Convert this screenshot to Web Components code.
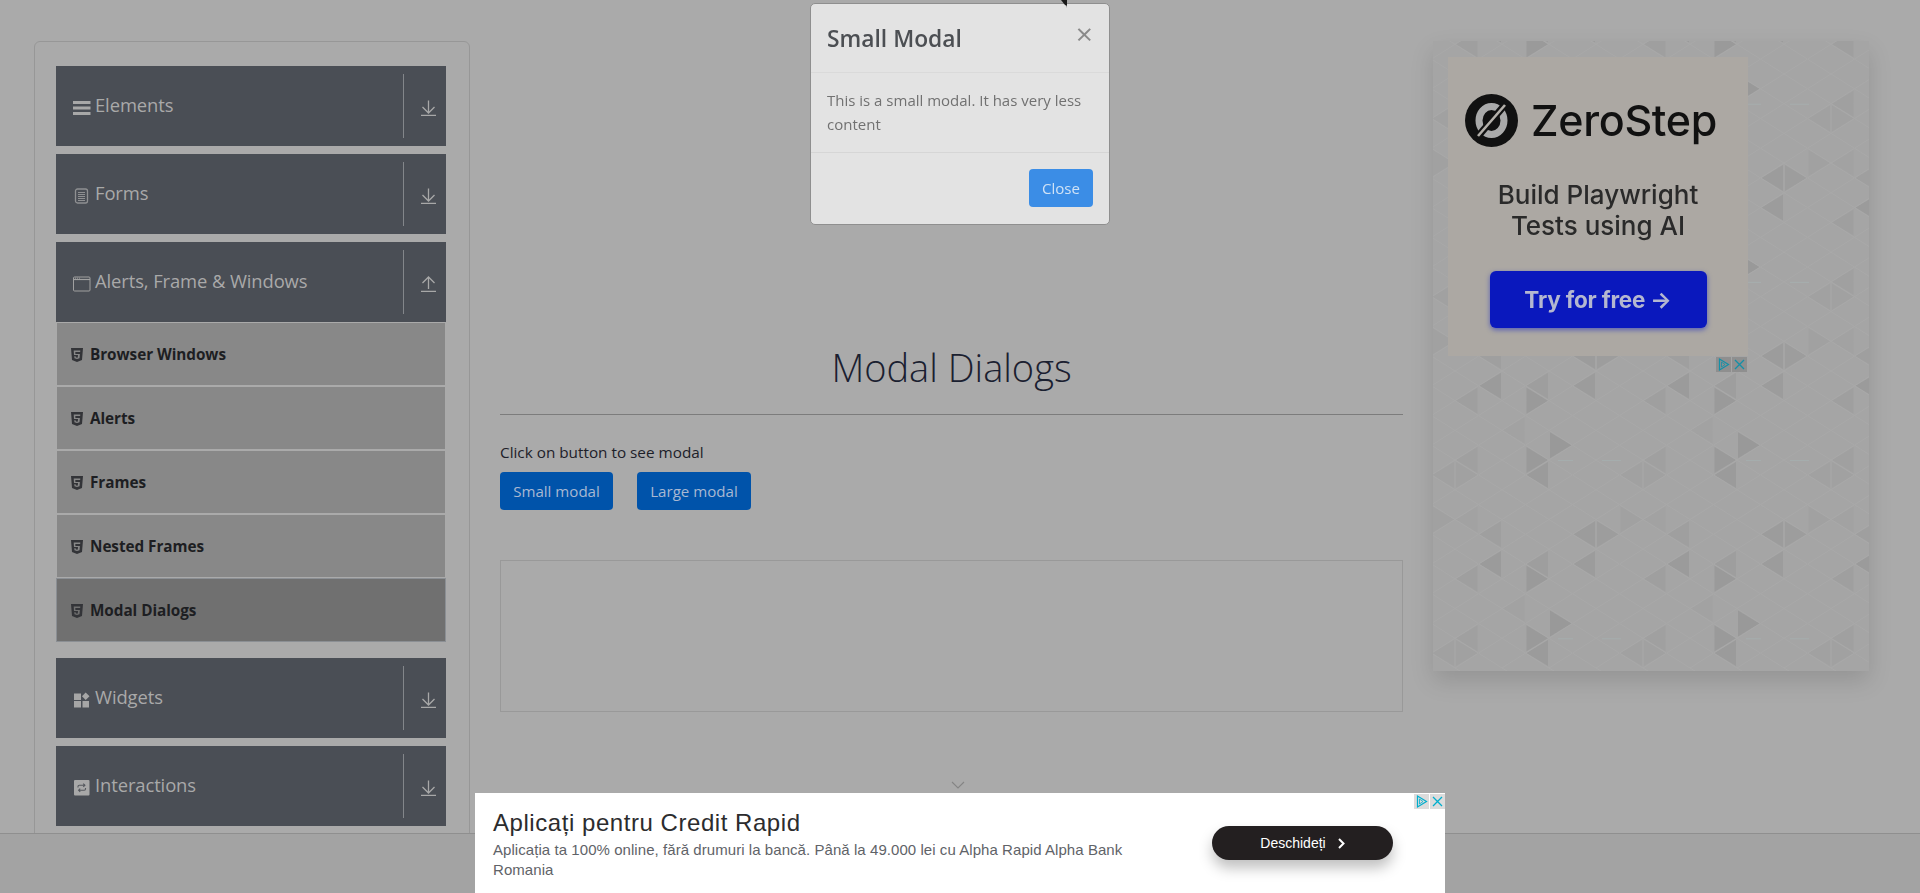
<!DOCTYPE html>
<html lang="en">
<head>
<meta charset="utf-8">
<title>Modal Dialogs</title>
<style>
  html, body { margin: 0; height: 893px; overflow: hidden; background: #aaa; }
  body { position: relative; font-family: "Open Sans", "Liberation Sans", sans-serif; }
</style>
</head>
<body>
<app-shell>
  <side-nav slot="nav">
    <nav-group label="Elements" icon="menu"></nav-group>
    <nav-group label="Forms" icon="note"></nav-group>
    <nav-group label="Alerts, Frame &amp; Windows" icon="window" open>
      <nav-item>Browser Windows</nav-item>
      <nav-item>Alerts</nav-item>
      <nav-item>Frames</nav-item>
      <nav-item>Nested Frames</nav-item>
      <nav-item active>Modal Dialogs</nav-item>
    </nav-group>
    <nav-group label="Widgets" icon="widgets"></nav-group>
    <nav-group label="Interactions" icon="swap"></nav-group>
  </side-nav>
  <page-main slot="main" heading="Modal Dialogs"></page-main>
  <promo-card slot="promo"></promo-card>
</app-shell>
<page-footer></page-footer>
<bottom-ad></bottom-ad>
<modal-dialog heading="Small Modal">This is a small modal. It has very less content</modal-dialog>

<script>
const icons = {
  menu: `<svg width="18" height="16" viewBox="0 0 18 16"><path fill="#a8a8a8" d="M0 1h17.5v3H0zM0 6.5h17.5v3H0zM0 12h17.5v3H0z"/></svg>`,
  note: `<svg width="18" height="16" viewBox="0 0 18 16" fill="none" stroke="#8f9092"><rect x="2.5" y="1" width="12" height="14" rx="2" stroke-width="1.3"/><path d="M5 4.5h7M5 6.5h7M5 8.5h7M5 10.5h7M5 12.5h7" stroke-width="1"/></svg>`,
  window: `<svg width="18" height="16" viewBox="0 0 18 16" fill="none" stroke="#a0a0a0"><rect x=".5" y="1" width="16.5" height="14" rx="1"/><path d="M1 3.5h16" stroke-width="1.2"/><path d="M2 2.2h1M4 2.2h1M6 2.2h1" stroke-width=".9"/></svg>`,
  widgets: `<svg width="18" height="16" viewBox="0 0 18 16" fill="#a6a6a6"><path d="M1 1.500h7v6.500H1zM1 9h7v6.500H1zM9.500 9H16v6.500H9.500zM12.700 .5l3.800 3.800-3.800 3.700-3.700-3.700z"/></svg>`,
  swap: `<svg width="18" height="16" viewBox="0 0 18 16"><rect x="1" y="0" width="15.500" height="15.500" rx="1" fill="#a8a8a8"/><path fill="none" stroke="#55585e" stroke-width="1.100" d="M5 7.500V6.500c0-.8.5-1.200 1.200-1.200h5.500M10.300 3.700l1.600 1.600-1.600 1.600M12.500 8v1c0 .8-.5 1.200-1.200 1.200H5.800M7.200 8.600l-1.600 1.600 1.600 1.600"/></svg>`
};

const arrowIcon = up => up
  ? `<svg width="15" height="16" viewBox="0 0 15 16" fill="none" stroke="#a8a8a8" stroke-width="1.300"><path d="M0 15.300h15M7.500 13V1.500M1.500 7l6-6 6 6"/></svg>`
  : `<svg width="15" height="16" viewBox="0 0 15 16" fill="none" stroke="#a8a8a8" stroke-width="1.300"><path d="M0 15.300h15M7.500 .5V12.500M1.500 7l6 6 6-6"/></svg>`;

const shieldIcon = `<svg width="12" height="14" viewBox="0 0 12 14"><path fill="#333438" fill-rule="evenodd" d="M0 0h12l-1 12L6 14l-5-2zM9.300 2.600H2.700l.3 4.500h4l-.2 2.300L6 9.700l-1.300-.4-.1-1.100H3.300l.2 2.100L6 11.100l2.500-.8.4-4.400H4.400l-.1-2h4.900z"/></svg>`;

class AppShell extends HTMLElement {
  connectedCallback() {
    const shadowRoot = this.attachShadow({ mode: 'open' });
    shadowRoot.innerHTML = `
      <style>
        :host { display: grid; grid-template-columns: 436px 903px 436px; column-gap: 30px; padding: 41px 0 0 34px; }
      </style>
      <slot name="nav"></slot>
      <slot name="main"></slot>
      <slot name="promo"></slot>
    `;
  }
}
customElements.define('app-shell', AppShell);

class SideNav extends HTMLElement {
  connectedCallback() {
    const shadowRoot = this.attachShadow({ mode: 'open' });
    shadowRoot.innerHTML = `
      <style>
        :host { display: flex; flex-direction: column; gap: 8px; height: 880px; box-sizing: border-box; padding: 24px 23px 0 21px; border: 1px solid #979797; border-radius: 6px; }
      </style>
      <slot></slot>
    `;
  }
}
customElements.define('side-nav', SideNav);

class NavGroup extends HTMLElement {
  connectedCallback() {
    const shadowRoot = this.attachShadow({ mode: 'open' });
    const open = this.hasAttribute('open');
    shadowRoot.innerHTML = `
      <style>
        :host { display: block; }
        :host([open]) { margin-bottom: 8px; }
        .head { display: flex; align-items: stretch; height: 80px; box-sizing: border-box; padding: 8px 0 8px 17px; background: #4a4e55; }
        .title { flex: 1; display: flex; align-items: center; gap: 4px; font-size: 18.400px; color: #a9a9a9; letter-spacing: -.1px; }
        .title span { position: relative; top: -2px; }
        .title svg { margin-top: 4px; }
        .arrow { width: 43px; box-sizing: border-box; border-left: 1px solid #83868a; display: flex; align-items: center; justify-content: flex-end; padding: 4px 10px 0 0; }
        .list { display: flex; flex-direction: column; gap: 2px; padding: 1px 1px 0; }
      </style>
      <div class="head">
        <div class="title">${icons[this.getAttribute('icon')]}<span>${this.getAttribute('label').replace('&', '&amp;')}</span></div>
        <div class="arrow">${arrowIcon(open)}</div>
      </div>
      ${open ? '<div class="list"><slot></slot></div>' : ''}
    `;
  }
}
customElements.define('nav-group', NavGroup);

class NavItem extends HTMLElement {
  connectedCallback() {
    const shadowRoot = this.attachShadow({ mode: 'open' });
    shadowRoot.innerHTML = `
      <style>
        :host { display: flex; align-items: center; gap: 7px; height: 62px; box-sizing: border-box; padding: 0 0 1px 14px; background: #888; font-size: 15.300px; font-weight: 700; letter-spacing: -.05px; color: #1d1e22; }
        :host([active]) { height: 64px; margin: -1px -1px 0; padding-left: 14px; background: #707070; border: 1px solid #8b8f94; }
        svg { flex: none; margin-top: 2px; }
      </style>
      ${shieldIcon}<slot></slot>
    `;
  }
}
customElements.define('nav-item', NavItem);

class PageMain extends HTMLElement {
  connectedCallback() {
    const shadowRoot = this.attachShadow({ mode: 'open' });
    shadowRoot.innerHTML = `
      <style>
        :host { display: block; padding-top: 302px; color: #1d2129; }
        h1 { margin: 0; font-size: 38px; font-weight: 300; line-height: 48px; text-align: center; color: #1a2030; }
        hr { margin: 23px 0 0; border: 0; border-top: 1px solid #7c7c7c; }
        p { margin: 25px 0 0; font-size: 15.300px; line-height: 24px; }
        .actions { display: flex; gap: 24px; margin-top: 8px; }
        .large { width: 114px; }
        .frame { height: 152px; margin-top: 50px; border: 1px solid #999; box-sizing: border-box; }
      </style>
      <h1>${this.getAttribute('heading')}</h1>
      <hr>
      <p>Click on button to see modal</p>
      <div class="actions">
        <blue-button>Small modal</blue-button>
        <blue-button class="large">Large modal</blue-button>
      </div>
      <div class="frame"></div>
    `;
  }
}
customElements.define('page-main', PageMain);

class BlueButton extends HTMLElement {
  connectedCallback() {
    const shadowRoot = this.attachShadow({ mode: 'open' });
    shadowRoot.innerHTML = `
      <style>
        :host { display: flex; align-items: center; justify-content: center; width: 113px; height: 38px; border-radius: 4px; background: var(--btn-bg, #0053aa); color: var(--btn-fg, #a8b8d2); font-size: 15.100px; }
      </style>
      <slot></slot>
    `;
  }
}
customElements.define('blue-button', BlueButton);

class PromoCard extends HTMLElement {
  connectedCallback() {
    const shadowRoot = this.attachShadow({ mode: 'open' });
    shadowRoot.innerHTML = `
      <style>
        :host { display: block; position: relative; width: 436px; height: 630px; box-sizing: border-box; padding: 16px 0 0 15px; box-shadow: 0 10px 22px rgba(0,0,0,.13); overflow: visible; font-family: Inter, "Liberation Sans", sans-serif; }
        .bg { position: absolute; inset: 0; }
        .box { position: relative; width: 300px; height: 299px; background: #aca8a3; display: flex; flex-direction: column; align-items: center; filter: blur(.5px); }
        .logo { display: flex; align-items: center; gap: 13px; margin-top: 37px; align-self: flex-start; padding-left: 17px; font-size: 43px; font-weight: 500; color: #111; letter-spacing: -.3px; line-height: 53px; }
        .lead { margin-top: 32px; font-size: 26px; line-height: 31px; font-weight: 500; text-align: center; color: #2a2a2a; }
        .cta { margin-top: 30px; width: 217px; height: 57px; border-radius: 6px; background: #0a18bd; box-shadow: 0 2px 5px rgba(10,25,196,.5); color: #b4b7d0; font-size: 22.500px; font-weight: 700; display: flex; align-items: center; justify-content: center; letter-spacing: -.2px; }
        .choices { position: absolute; left: 283px; top: 316px; }
      </style>
      <svg class="bg" id="bg" width="436" height="630"></svg>
      <div class="box">
        <div class="logo">
          <svg width="53" height="53" viewBox="0 0 53 53">
            <circle cx="26.500" cy="26.500" r="26.500" fill="#111"/>
            <ellipse cx="26.500" cy="26.500" rx="12.500" ry="14" fill="none" stroke="#aaa" stroke-width="7"/>
            <path d="M38 13L15 40" stroke="#111" stroke-width="7"/>
            <path d="M40 11L13 42" stroke="#b4b0aa" stroke-width="2.600"/>
          </svg>
          <span>ZeroStep</span>
        </div>
        <div class="lead">Build Playwright<br>Tests using AI</div>
        <div class="cta">Try for free →</div>
      </div>
      <ad-choices class="choices" bg="#8f8f8f" fg="#1390a8"></ad-choices>
    `;
    this.drawPattern(shadowRoot.querySelector('#bg'));
  }

  // triangle lattice, the tile repeats every 8 columns and 12 half rows
  drawPattern(svg) {
    const colW = 23.5, step = 14.85;
    const tile = [
      [3, 11, -1, '#9b9b9b'], [5, 11, -1, '#9e9e9e'], [7, 11, -1, '#9c9c9c'],
      [2, 0, -1, '#9f9f9f'], [4, 0, 1, '#9a9a9a'], [4, 2, -1, '#a2a2a2'],
      [5, 3, 1, '#999999'], [4, 4, 1, '#9a9a9a'], [2, 4, -1, '#a0a0a0'],
      [5, 5, -1, '#9b9b9b'], [1, 5, -1, '#a1a1a1'], [1, 5, 1, '#a1a1a1'],
      [2, 8, -1, '#a2a2a2'], [0, 8, 1, '#a1a1a1'], [3, 9, -1, '#9f9f9f'],
      [7, 9, -1, '#9c9c9c'], [7, 9, 1, '#9d9d9d']
    ];
    const x = k => -1.5 + k * colW;
    const y = n => 3.27 + n * step;
    let out = '<rect width="436" height="630" fill="#a5a5a5"/>';
    for (let c = 0; c < 3; c++) {
      for (let r = -1; r < 5; r++) {
        tile.forEach(([k, n, dir, fill]) => {
          const bx = x(k + c * 8), cy = y(n + r * 12);
          out += `<polygon fill="${fill}" points="${bx + dir},${cy - 13} ${bx + dir},${cy + 13} ${bx + dir * 22.500},${cy}"/>`;
        });
        out += `<rect x="${125 + c * 188}" y="${y(4 + r * 12)}" width="15" height="1" fill="#a6aeae"/>`;
        out += `<rect x="${169 + c * 188}" y="${y(4 + r * 12)}" width="19" height="1" fill="#a6aeae"/>`;
      }
    }
    let lines = '';
    for (let k = 0; k < 20; k++) {
      for (let n = -2; n < 44; n += 2) {
        const o = k % 2 ? n + 1 : n;
        const vx = x(k), vy = y(o - 1);
        lines += `M${vx} ${vy}L${vx + colW} ${vy + step}M${vx} ${vy}L${vx + colW} ${vy - step}`;
      }
    }
    out += `<path d="${lines}" stroke="#a9a9a9" stroke-width="1" fill="none"/>`;
    svg.innerHTML = out;
  }
}
customElements.define('promo-card', PromoCard);

class AdChoices extends HTMLElement {
  connectedCallback() {
    const shadowRoot = this.attachShadow({ mode: 'open' });
    const bg = this.getAttribute('bg');
    const fg = this.getAttribute('fg');
    shadowRoot.innerHTML = `
      <style>
        :host { display: flex; gap: 1px; }
        svg { display: block; background: ${bg}; }
      </style>
      <svg width="15" height="15" viewBox="0 0 15 15" fill="none" stroke="${fg}" stroke-width="1.200"><path d="M3.500 2v11l9-5.500z"/><path d="M5.500 5v5l3.500-2.500z" stroke-width=".8"/></svg>
      <svg width="15" height="15" viewBox="0 0 15 15" fill="none" stroke="${fg}" stroke-width="1.300"><path d="M3 3l9 9M12 3l-9 9"/></svg>
    `;
  }
}
customElements.define('ad-choices', AdChoices);

class PageFooter extends HTMLElement {
  connectedCallback() {
    const shadowRoot = this.attachShadow({ mode: 'open' });
    shadowRoot.innerHTML = `
      <style>
        :host { display: block; position: absolute; left: 0; right: 0; bottom: 0; height: 60px; box-sizing: border-box; background: #a3a3a3; border-top: 1px solid #8f8f8f; }
      </style>
    `;
  }
}
customElements.define('page-footer', PageFooter);

class BottomAd extends HTMLElement {
  connectedCallback() {
    const shadowRoot = this.attachShadow({ mode: 'open' });
    shadowRoot.innerHTML = `
      <style>
        :host { display: flex; align-items: flex-start; position: absolute; left: 475px; bottom: 0; width: 970px; height: 100px; box-sizing: border-box; background: #fff; font-family: "Liberation Sans", Arial, sans-serif; padding: 16px 0 0 18px; }
        .copy { width: 650px; }
        h2 { margin: 0; font-size: 24px; font-weight: 400; line-height: 28px; letter-spacing: .55px; color: #2c2c2e; }
        p { margin: 3px 0 0; font-size: 15px; line-height: 19.500px; color: #5f6368; letter-spacing: .06px; }
        .open { margin: 17px 0 0 69px; width: 181px; height: 34px; border-radius: 17px; background: #231f20; color: #fff; font-size: 14px; display: flex; align-items: center; justify-content: center; gap: 12px; box-shadow: 0 8px 14px rgba(0,0,0,.25); }
        .choices { position: absolute; right: 0; top: 1px; }
        .tab { position: absolute; left: 476px; top: -12px; }
      </style>
      <svg class="tab" width="14" height="9" viewBox="0 0 14 9" fill="none" stroke="#858585" stroke-width="1.100"><path d="M1 1l6 6 6-6"/></svg>
      <ad-choices class="choices" bg="#dcdcdc" fg="#00aecd"></ad-choices>
      <div class="copy">
        <h2>Aplicați pentru Credit Rapid</h2>
        <p>Aplicația ta 100% online, fără drumuri la bancă. Până la 49.000 lei cu Alpha Rapid Alpha Bank Romania</p>
      </div>
      <div class="open"><span>Deschideți</span><svg width="7" height="11" viewBox="0 0 7 11" fill="none" stroke="#fff" stroke-width="2"><path d="M1 1l4.500 4.500L1 10"/></svg></div>
    `;
  }
}
customElements.define('bottom-ad', BottomAd);

class ModalDialog extends HTMLElement {
  connectedCallback() {
    const shadowRoot = this.attachShadow({ mode: 'open' });
    shadowRoot.innerHTML = `
      <style>
        :host { display: block; position: absolute; left: 810px; top: 3px; width: 300px; box-sizing: border-box; background: #e3e3e3; border: 1px solid #8f8f8f; border-radius: 5px; }
        .inner { filter: blur(.35px); }
        header { display: flex; justify-content: space-between; height: 69px; box-sizing: border-box; padding: 17px 16px 0; border-bottom: 1px solid #dadada; }
        h5 { margin: 0; font-size: 22.800px; font-weight: 600; line-height: 36px; color: #4c4f53; }
        .x { font-size: 30px; line-height: 24px; color: #8a8a8a; font-weight: 400; margin: 1px 0 0 0; }
        .body { height: 80px; box-sizing: border-box; padding: 15px 16px 0; font-size: 15px; line-height: 24px; color: #717171; border-bottom: 1px solid #d6d6d6; }
        footer { display: flex; justify-content: flex-end; padding: 16px; height: 71px; box-sizing: border-box; --btn-bg: #3b8de6; --btn-fg: #cfe2f6; }
        blue-button { width: 64px; }
        .cursor { position: absolute; left: 250px; top: -4px; }
      </style>
      <div class="inner">
        <header><h5>${this.getAttribute('heading')}</h5><span class="x">×</span></header>
        <div class="body"><slot></slot></div>
        <footer><blue-button>Close</blue-button></footer>
      </div>
      <svg class="cursor" width="7" height="9" viewBox="0 0 7 9"><path d="M0 0h6v6L4 5z" fill="#1a1a1a"/><path d="M6 6v2L5 6z" fill="#999"/></svg>
    `;
  }
}
customElements.define('modal-dialog', ModalDialog);
</script>
</body>
</html>
